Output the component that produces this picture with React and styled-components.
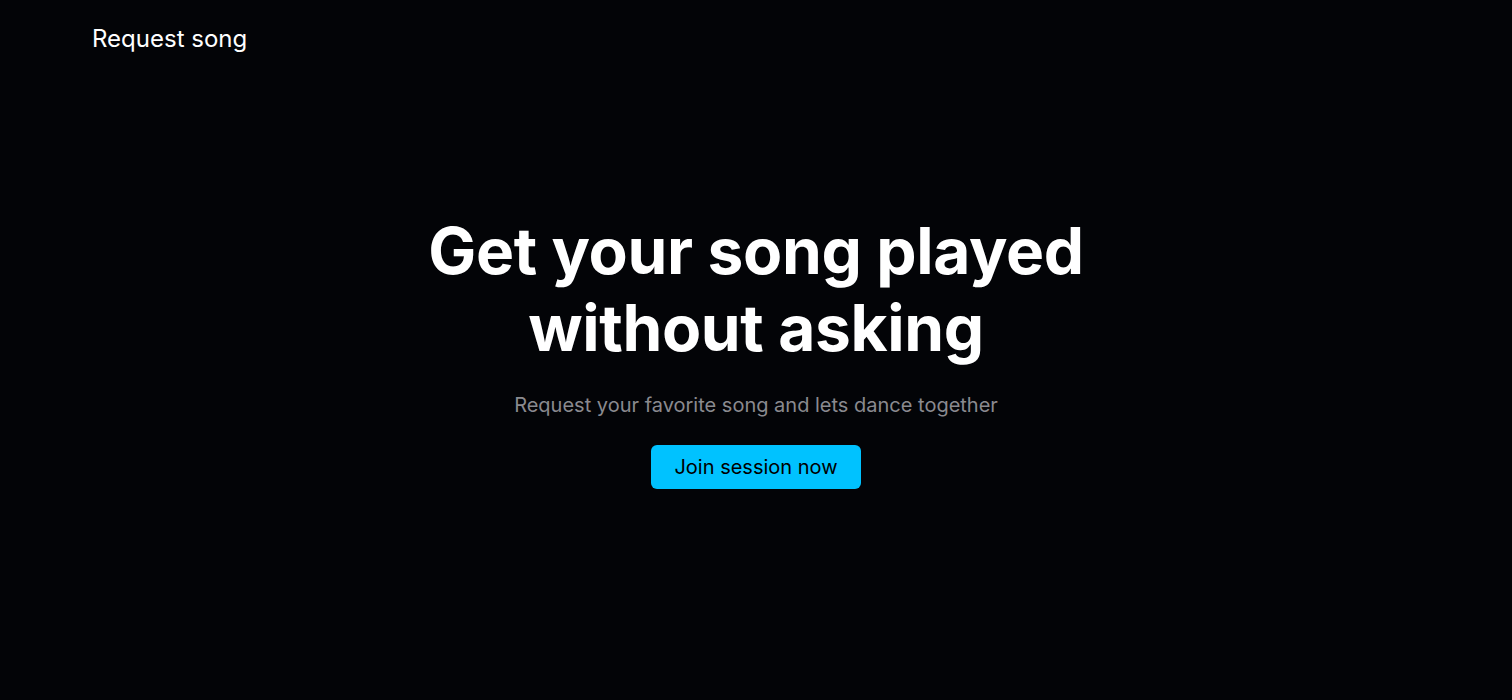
import React from "react";
import styled, { createGlobalStyle } from "styled-components";

const Global = createGlobalStyle`
  html, body { margin: 0; padding: 0; background: #030407; }
  body { font-family: Inter, "Noto Sans", sans-serif; color: #fff; }
`;

const Page = styled.div`
  min-height: 700px;
  background: #030407;
  display: flex;
  flex-direction: column;
`;

const Header = styled.header`
  display: flex;
  align-items: center;
  padding: 21px 92px 0;
  height: 34px;
`;

const Brand = styled.span`
  font-size: 24px;
  font-weight: 400;
  color: #ffffff;
`;

const Hero = styled.main`
  display: flex;
  flex-direction: column;
  align-items: center;
  text-align: center;
  padding-top: 158px;
`;

const Title = styled.h1`
  margin: 0;
  font-size: 64px;
  font-weight: 700;
  line-height: 1.2;
  color: #ffffff;
  letter-spacing: -0.35px;
`;

const Subtitle = styled.p`
  margin: 26px 0 0;
  font-size: 20px;
  color: #8a8a8f;
`;

const Button = styled.button`
  margin-top: 28px;
  height: 44px;
  padding: 0 23px;
  border: none;
  border-radius: 6px;
  background: #00c2ff;
  color: #000;
  font-family: Inter, sans-serif;
  font-size: 20px;
  cursor: pointer;
`;

export default function App() {
  return (
    <>
      <Global />
      <Page>
        <Header>
          <Brand>Request song</Brand>
        </Header>
        <Hero>
          <Title>
            Get your song played
            <br />
            without asking
          </Title>
          <Subtitle>Request your favorite song and lets dance together</Subtitle>
          <Button>Join session now</Button>
        </Hero>
      </Page>
    </>
  );
}
